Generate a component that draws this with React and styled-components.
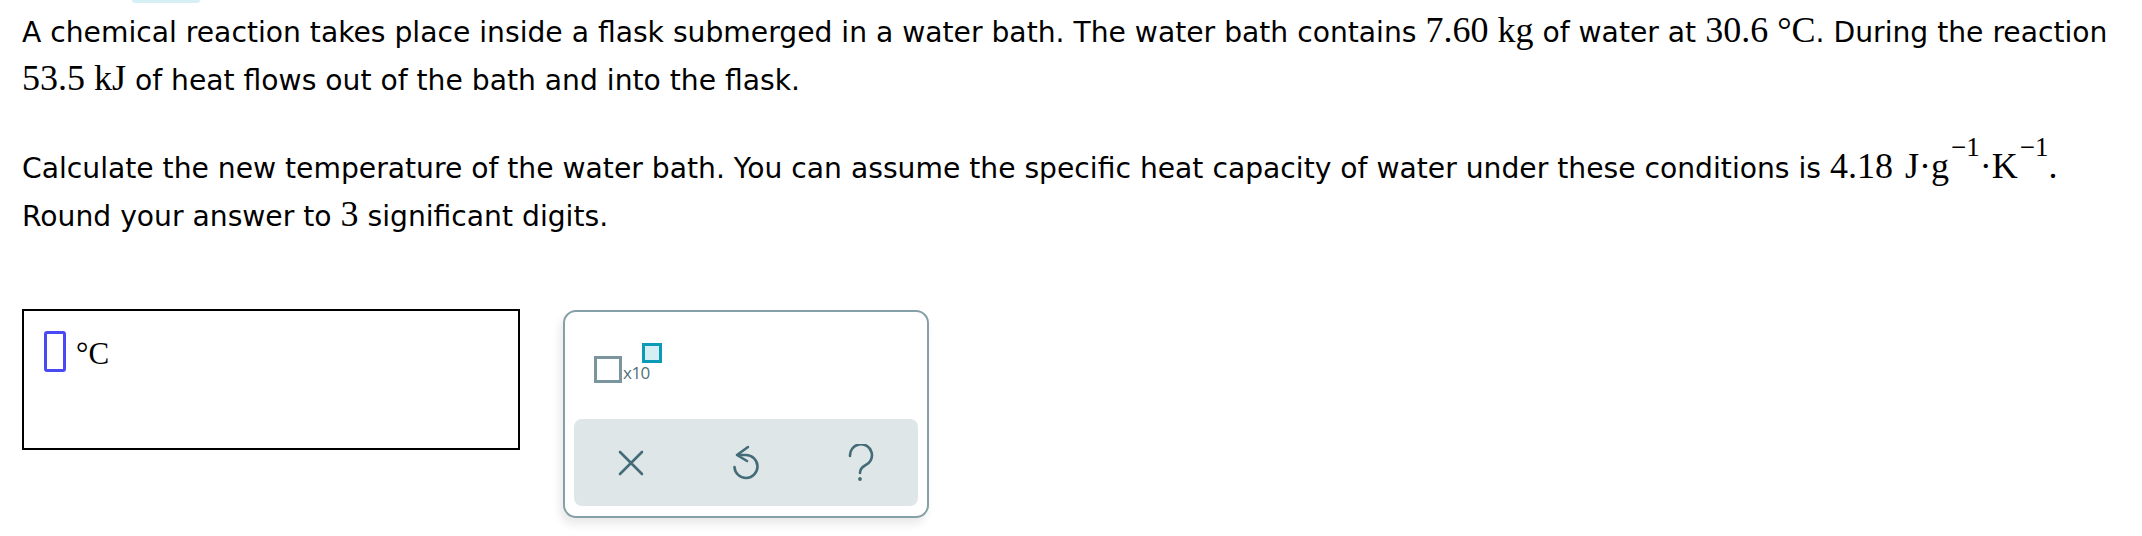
import React from 'react';
import styled, { createGlobalStyle } from 'styled-components';

const Global = createGlobalStyle`
  html, body { margin: 0; padding: 0; background: #fff; }
  body { width: 2142px; height: 536px; overflow: hidden; }
`;

const Page = styled.div`
  padding: 0 22px;
  font-family: "DejaVu Sans", Verdana, sans-serif;
  font-size: 28.2px;
  color: #000;
`;

const TopTab = styled.div`
  width: 68px;
  height: 3px;
  margin-left: 110px;
  background: #d6f0f6;
  border-radius: 0 0 10px 10px;
`;

const Paragraph = styled.p`
  margin: ${(p) => p.$top}px 0 0;
  line-height: 47.6px;
  white-space: nowrap;
`;

const M = styled.span`
  font-family: "Liberation Serif", "Times New Roman", serif;
  font-size: 36px;
  line-height: 1;
  margin-left: ${(p) => p.$ml || 0}px;
`;

const Sup = styled.span`
  font-size: 27px;
  line-height: 0;
  vertical-align: 22px;
  margin-left: 2px;
`;

const AnswerRow = styled.div`
  display: flex;
  align-items: flex-start;
  gap: 43px;
  margin-top: 69px;
`;

const AnswerBox = styled.div`
  box-sizing: border-box;
  width: 498px;
  height: 141px;
  border: 2px solid #000;
  padding: 20px 0 0 20px;
  display: flex;
  align-items: flex-start;
  gap: 10px;
`;

const Cursor = styled.div`
  box-sizing: border-box;
  width: 22px;
  height: 41px;
  border: 3px solid #4a4af5;
  border-radius: 3px;
`;

const Unit = styled.span`
  font-family: "Liberation Serif", "Times New Roman", serif;
  font-size: 31px;
  line-height: 31px;
  margin-top: 7px;
`;

const Keypad = styled.div`
  box-sizing: border-box;
  width: 366px;
  height: 208px;
  margin-top: 1px;
  border: 2px solid #86a0a7;
  border-radius: 13px;
  background: #fff;
  box-shadow: -3px 6px 10px rgba(0, 0, 0, 0.09);
  display: flex;
  flex-direction: column;
  padding: 0 9px 10px;
`;

const KeyArea = styled.div`
  height: 107px;
  display: flex;
  align-items: flex-start;
  padding: 31px 0 0 20px;
  box-sizing: border-box;
`;

const PowerKey = styled.div`
  display: flex;
  align-items: flex-start;
  gap: 1px;
`;

const BaseSquare = styled.div`
  box-sizing: border-box;
  width: 28px;
  height: 27px;
  margin-top: 13px;
  border: 3px solid #7a959d;
`;

const PowerLabel = styled.div`
  display: flex;
  flex-direction: column;
`;

const ExpSquare = styled.div`
  box-sizing: border-box;
  width: 20px;
  height: 20px;
  margin-left: 19px;
  border: 3px solid #0c9bb6;
  background: #d4eef3;
`;

const Ten = styled.span`
  font-family: "Open Sans", "Noto Sans", sans-serif;
  font-size: 17px;
  line-height: 16px;
  margin-top: 2px;
  color: #50717a;
  letter-spacing: -0.5px;
`;

const Panel = styled.div`
  height: 87px;
  background: #dfe6e8;
  border-radius: 8px;
  display: grid;
  grid-template-columns: repeat(3, 1fr);
  align-items: center;
  justify-items: center;
`;

const IconButton = styled.div`
  display: flex;
  align-items: center;
  justify-content: center;
  color: #436c78;
`;

const stroke = { fill: 'none', stroke: 'currentColor', strokeWidth: 2.6, strokeLinecap: 'round', strokeLinejoin: 'round' };

export default function App() {
  return (
    <>
      <Global />
      <Page>
        <TopTab />
        <Paragraph $top={6}>
          A chemical reaction takes place inside a flask submerged in a water bath. The water bath contains{' '}
          <M>7.60 kg</M> of water at <M>30.6 °C</M>. During the reaction
          <br />
          <M>53.5 kJ</M> of heat flows out of the bath and into the flask.
        </Paragraph>
        <Paragraph $top={41}>
          Calculate the new temperature of the water bath. You can assume the specific heat capacity of water under these
          conditions is <M>4.18</M>
          <M $ml={12}>
            J·g<Sup>−1</Sup>·K<Sup>−1</Sup>.
          </M>
          <br />
          Round your answer to <M>3</M> significant digits.
        </Paragraph>
        <AnswerRow>
          <AnswerBox>
            <Cursor />
            <Unit>°C</Unit>
          </AnswerBox>
          <Keypad>
            <KeyArea>
              <PowerKey>
                <BaseSquare />
                <PowerLabel>
                  <ExpSquare />
                  <Ten>x10</Ten>
                </PowerLabel>
              </PowerKey>
            </KeyArea>
            <Panel>
              <IconButton>
                <svg width="26" height="26" viewBox="0 0 26 26">
                  <path d="M2 2 L24 24 M24 2 L2 24" {...stroke} />
                </svg>
              </IconButton>
              <IconButton>
                <svg width="28" height="36" viewBox="0 0 28 36">
                  <path d="M16 2 L5 10 L15 16" {...stroke} />
                  <path d="M6 10 H14 A11.5 11.5 0 1 1 2.5 22" {...stroke} />
                </svg>
              </IconButton>
              <IconButton>
                <svg width="26" height="38" viewBox="0 0 26 38">
                  <path d="M2 12 A11 11 0 1 1 17 21.5 C13.5 23.5 12 25.5 12 29" {...stroke} />
                  <circle cx="12" cy="35" r="1.9" fill="currentColor" />
                </svg>
              </IconButton>
            </Panel>
          </Keypad>
        </AnswerRow>
      </Page>
    </>
  );
}
